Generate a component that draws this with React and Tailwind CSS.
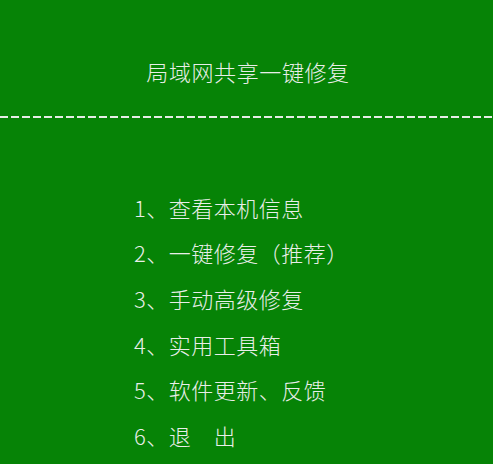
const items = [
  '1、查看本机信息',
  '2、一键修复（推荐）',
  '3、手动高级修复',
  '4、实用工具箱',
  '5、软件更新、反馈',
  '6、退　出',
]

export default function App() {
  return (
    <div
      className="w-full h-[464px] bg-[#068306] text-[#e9eee9] overflow-hidden"
      style={{ fontFamily: '"Noto Sans CJK SC", "Noto Sans", sans-serif' }}
    >
      {/* Title */}
      <div className="pt-[56px] text-center text-[22px] font-light leading-[30px] tracking-[0.6px] pl-[3px]">
        局域网共享一键修复
      </div>

      {/* Dashed separator */}
      <div className="mt-[30px] h-[2px] w-full bg-[repeating-linear-gradient(90deg,#e6ece6_0_8px,transparent_8px_11px)]" />

      {/* Menu */}
      <div className="mt-[66px] pl-[134px] flex flex-col">
        {items.map((item) => (
          <div
            key={item}
            className="h-[45.6px] flex items-center text-[22px] font-light leading-none tracking-[0.5px]"
          >
            {item}
          </div>
        ))}
      </div>
    </div>
  )
}
